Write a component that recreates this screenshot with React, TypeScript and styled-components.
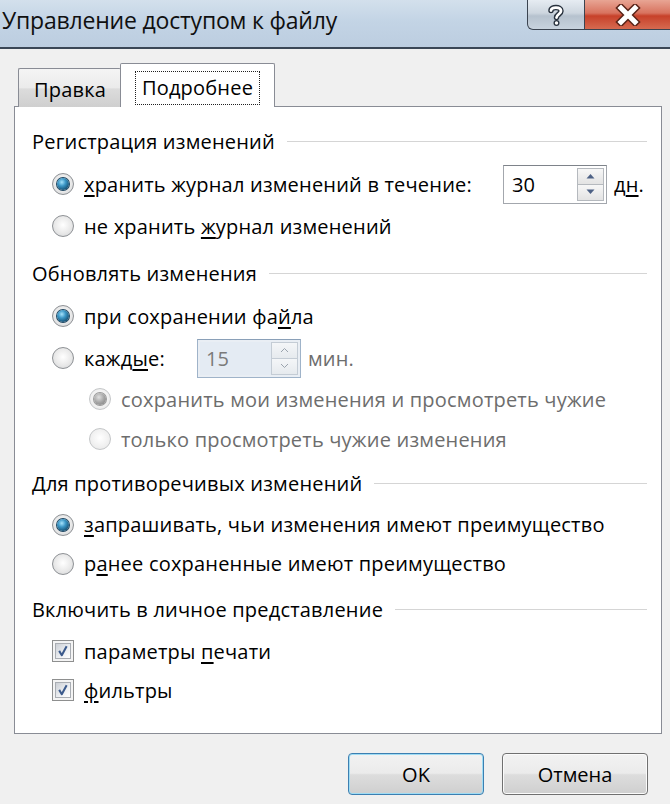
import * as React from 'react';
import styled, { createGlobalStyle, css } from 'styled-components';

const GlobalStyle = createGlobalStyle`
  html, body {
    margin: 0;
    padding: 0;
    background: #f0f0f0;
  }
  body {
    font-family: 'Open Sans', 'Noto Sans', 'DejaVu Sans', sans-serif;
    color: #000000;
  }
`;

const Window = styled.div`
  width: 670px;
  height: 804px;
  overflow: hidden;
  display: flex;
  flex-direction: column;
  background: #f0f0f0;
`;

const TitleBar = styled.div`
  height: 47px;
  flex-shrink: 0;
  display: flex;
  align-items: flex-start;
  background: linear-gradient(to bottom, #d3e0ec 0%, #c3d4e5 45%, #bccde0 100%);
  border-bottom: 2px solid #3a4656;
`;

const Title = styled.div`
  font-size: 23px;
  line-height: 40px;
  padding-left: 2px;
  color: #101010;
  letter-spacing: -0.2px;
  white-space: nowrap;
`;

const Controls = styled.div`
  margin-left: auto;
  display: flex;
  height: 30px;
`;

const CaptionButton = styled.div<{ $close?: boolean }>`
  display: flex;
  align-items: center;
  justify-content: center;
  height: 29px;
  border: 1px solid #3b4450;
  border-top: none;
  ${p => p.$close ? css`
    width: 85px;
    border-right: none;
    border-left: none;
    background: linear-gradient(to bottom, #e8a594 0%, #d8735f 45%, #c7412a 55%, #d66a50 100%);
  ` : css`
    width: 56px;
    border-radius: 0 0 0 6px;
    background: linear-gradient(to bottom, #e6ecf2 0%, #cdd6df 45%, #b6c2ce 55%, #c8d3de 100%);
  `}
`;

const Client = styled.div`
  flex: 1;
  display: flex;
  flex-direction: column;
  padding: 14px 8px 0 14px;
`;

const TabStrip = styled.div`
  display: flex;
  align-items: flex-end;
  padding-left: 4px;
  height: 44px;
  position: relative;
  z-index: 1;
  margin-bottom: -1px;
`;

const Tab = styled.div<{ $active?: boolean }>`
  display: flex;
  align-items: center;
  justify-content: center;
  font-size: 20px;
  letter-spacing: 0.2px;
  border: 1px solid #898c95;
  border-radius: 2px 2px 0 0;
  box-sizing: border-box;
  ${p => p.$active ? css`
    height: 44px;
    width: 155px;
    background: #ffffff;
    border-bottom: none;
    margin-left: -1px;
  ` : css`
    height: 39px;
    width: 103px;
    background: linear-gradient(to bottom, #f4f4f4 0%, #ebebeb 50%, #dcdcdc 52%, #cfcfcf 100%);
    border-right: none;
    border-bottom: none;
    padding-top: 2px;
  `}
`;

const FocusRect = styled.span`
  border: 1px dotted #202020;
  padding: 2px 6px 3px 6px;
  margin-top: 4px;
`;

const Panel = styled.div`
  width: 648px;
  height: 628px;
  box-sizing: border-box;
  border: 1px solid #898c95;
  background: #ffffff;
  padding: 12px 14px 0 17px;
  display: flex;
  flex-direction: column;
`;

const SectionHeader = styled.div<{ $mt?: number }>`
  height: 44px;
  margin-top: ${p => p.$mt ?? 4}px;
  display: flex;
  align-items: center;
  font-size: 20px;
  letter-spacing: 0.2px;
  white-space: nowrap;
  &::after {
    content: '';
    flex: 1;
    height: 1px;
    margin-left: 12px;
    background: #d5d5d5;
  }
`;

const OptionRow = styled.div<{ $h: number; $indent?: number; $disabled?: boolean }>`
  height: ${p => p.$h}px;
  display: flex;
  align-items: center;
  padding-left: ${p => p.$indent ?? 20}px;
  font-size: 20px;
  letter-spacing: 0.2px;
  white-space: nowrap;
  color: ${p => (p.$disabled ? '#6d6d6d' : '#000000')};
`;

const Label = styled.span`
  margin-left: 10px;
`;

const Key = styled.span`
  text-decoration: underline;
  text-underline-offset: 3px;
`;

const RadioOuter = styled.span<{ $disabled?: boolean }>`
  width: 22px;
  height: 22px;
  box-sizing: border-box;
  border-radius: 50%;
  border: 1px solid ${p => (p.$disabled ? '#c4c6c8' : '#8e9195')};
  background: ${p => p.$disabled
    ? 'radial-gradient(circle at 50% 45%, #ffffff 0%, #f1f1f1 55%, #e4e4e4 100%)'
    : 'radial-gradient(circle at 50% 45%, #ffffff 0%, #e9e9e9 55%, #cfd1d3 100%)'};
  display: flex;
  align-items: center;
  justify-content: center;
  flex-shrink: 0;
`;

const RadioDot = styled.span<{ $disabled?: boolean }>`
  width: 12px;
  height: 12px;
  border-radius: 50%;
  background: ${p => p.$disabled
    ? 'radial-gradient(circle at 40% 35%, #e0e0e0 0%, #a5a5a5 50%, #7a7a7a 100%)'
    : 'radial-gradient(circle at 40% 35%, #a6e2fb 0%, #3d98c7 35%, #1a5a80 70%, #0f3450 100%)'};
  box-shadow: 0 0 0 1px ${p => (p.$disabled ? '#9a9a9a' : '#1d4661')};
`;

const Radio: React.FC<{ checked?: boolean; disabled?: boolean }> = ({ checked, disabled }) => (
  <RadioOuter $disabled={disabled}>
    {checked && <RadioDot $disabled={disabled}/>}
  </RadioOuter>
);

const CheckBox = styled.span`
  width: 22px;
  height: 22px;
  box-sizing: border-box;
  border: 1px solid #8e8f8f;
  background: #f4f4f4;
  padding: 2px;
  flex-shrink: 0;
  display: flex;
  svg {
    width: 16px;
    height: 16px;
    background: linear-gradient(135deg, #cbcfd5 0%, #eef0f3 60%, #ffffff 100%);
    border: 1px solid #a9adb3;
    box-sizing: border-box;
  }
`;

const Check: React.FC = () => (
  <CheckBox>
    <svg viewBox="0 0 15 15">
      <path d="M3.4 7.4 L6.2 12 L11.4 2.4" fill="none" stroke="#3b5a8c" strokeWidth="2.2" strokeLinejoin="round"/>
    </svg>
  </CheckBox>
);

const SpinBox = styled.div<{ $disabled?: boolean }>`
  width: 104px;
  height: 39px;
  box-sizing: border-box;
  display: flex;
  align-items: stretch;
  border: 1px solid ${p => (p.$disabled ? '#9fb3c9' : '#a3a7ad')};
  border-top-color: ${p => (p.$disabled ? '#8aa0b8' : '#7e838a')};
  background: ${p => (p.$disabled ? '#e9eef4' : '#ffffff')};
  padding: 2px;
`;

const SpinValue = styled.div<{ $disabled?: boolean }>`
  flex: 1;
  display: flex;
  align-items: center;
  padding-left: 6px;
  font-size: 20px;
  color: ${p => (p.$disabled ? '#7a7a7a' : '#000000')};
  background: ${p => (p.$disabled ? '#e4ebf3' : '#ffffff')};
`;

const SpinButtons = styled.div`
  width: 27px;
  display: flex;
  flex-direction: column;
`;

const SpinButton = styled.div<{ $disabled?: boolean }>`
  flex: 1;
  display: flex;
  align-items: center;
  justify-content: center;
  border: 1px solid ${p => (p.$disabled ? '#c4ccd5' : '#b5b9be')};
  background: ${p => (p.$disabled
    ? 'linear-gradient(to bottom, #f4f6f8, #e6eaee)'
    : 'linear-gradient(to bottom, #f7f7f7, #e3e3e3)')};
  & + & {
    margin-top: -1px;
  }
`;

const Arrow: React.FC<{ up?: boolean; disabled?: boolean }> = ({ up, disabled }) => (
  <svg width="9" height="6" viewBox="0 0 9 6">
    {disabled ? (
      <path d={up ? 'M1 5 L4.5 1.5 L8 5' : 'M1 1 L4.5 4.5 L8 1'} fill="none" stroke="#9aa3ad" strokeWidth="1"/>
    ) : (
      <path d={up ? 'M0.5 5.5 L4.5 1 L8.5 5.5 Z' : 'M0.5 0.5 L4.5 5 L8.5 0.5 Z'} fill="#4d6185"/>
    )}
  </svg>
);

const Spin: React.FC<{ value: string; disabled?: boolean }> = ({ value, disabled }) => (
  <SpinBox $disabled={disabled}>
    <SpinValue $disabled={disabled}>{value}</SpinValue>
    <SpinButtons>
      <SpinButton $disabled={disabled}><Arrow up disabled={disabled}/></SpinButton>
      <SpinButton $disabled={disabled}><Arrow disabled={disabled}/></SpinButton>
    </SpinButtons>
  </SpinBox>
);

const Unit = styled.span<{ $gap: number; $disabled?: boolean }>`
  margin-left: ${p => p.$gap}px;
  color: ${p => (p.$disabled ? '#6d6d6d' : '#000000')};
`;

const ButtonBar = styled.div`
  display: flex;
  justify-content: flex-end;
  gap: 18px;
  padding: 19px 14px 0 0;
`;

const DialogButton = styled.div<{ $default?: boolean; $w: number }>`
  width: ${p => p.$w}px;
  height: 42px;
  box-sizing: border-box;
  border-radius: 4px;
  display: flex;
  align-items: center;
  justify-content: center;
  font-size: 20px;
  border: 1px solid ${p => (p.$default ? '#3c7fb1' : '#707070')};
  background: linear-gradient(to bottom, #f2f2f2 0%, #ebebeb 48%, #dddddd 52%, #cfcfcf 100%);
  box-shadow: inset 0 0 0 1px ${p => (p.$default ? '#9fdcf4' : '#fbfbfb')};
`;

const HelpGlyph = () => (
  <svg width="20" height="24" viewBox="0 0 20 24">
    <path d="M5 7.5 C5 3.5 15 3.5 15 8 C15 11 10.5 11.5 10.5 14.5" fill="none" stroke="#27313d" strokeWidth="5.5" strokeLinecap="round"/>
    <circle cx="10.5" cy="20" r="3" fill="#27313d"/>
    <path d="M5 7.5 C5 3.5 15 3.5 15 8 C15 11 10.5 11.5 10.5 14.5" fill="none" stroke="#ffffff" strokeWidth="2.8" strokeLinecap="round"/>
    <circle cx="10.5" cy="20" r="1.7" fill="#ffffff"/>
  </svg>
);

const CloseGlyph = () => (
  <svg width="26" height="22" viewBox="0 0 26 22">
    <path d="M6 4 L20 18 M20 4 L6 18" stroke="#5a2418" strokeWidth="8" strokeLinecap="square"/>
    <path d="M6 4 L20 18 M20 4 L6 18" stroke="#ffffff" strokeWidth="5" strokeLinecap="square"/>
  </svg>
);

export default function App() {
  return (
    <>
      <GlobalStyle/>
      <Window>
        <TitleBar>
          <Title>Управление доступом к файлу</Title>
          <Controls>
            <CaptionButton><HelpGlyph/></CaptionButton>
            <CaptionButton $close><CloseGlyph/></CaptionButton>
          </Controls>
        </TitleBar>
        <Client>
          <TabStrip>
            <Tab>Правка</Tab>
            <Tab $active><FocusRect>Подробнее</FocusRect></Tab>
          </TabStrip>
          <Panel>
            <SectionHeader $mt={0}>Регистрация изменений</SectionHeader>
            <OptionRow $h={42}>
              <Radio checked/>
              <Label><Key>х</Key>ранить журнал изменений в течение:</Label>
              <Unit $gap={31}><Spin value="30"/></Unit>
              <Unit $gap={7}>д<Key>н</Key>.</Unit>
            </OptionRow>
            <OptionRow $h={42}>
              <Radio/>
              <Label>не хранить <Key>ж</Key>урнал изменений</Label>
            </OptionRow>

            <SectionHeader>Обновлять изменения</SectionHeader>
            <OptionRow $h={42}>
              <Radio checked/>
              <Label>при сохранении фа<Key>й</Key>ла</Label>
            </OptionRow>
            <OptionRow $h={42}>
              <Radio/>
              <Label>кажд<Key>ы</Key>е:</Label>
              <Unit $gap={32}><Spin value="15" disabled/></Unit>
              <Unit $gap={7} $disabled>мин.</Unit>
            </OptionRow>
            <OptionRow $h={40} $indent={57} $disabled>
              <Radio checked disabled/>
              <Label>сохранить мои изменения и просмотреть чужие</Label>
            </OptionRow>
            <OptionRow $h={40} $indent={57} $disabled>
              <Radio disabled/>
              <Label>только просмотреть чужие изменения</Label>
            </OptionRow>

            <SectionHeader $mt={2}>Для противоречивых изменений</SectionHeader>
            <OptionRow $h={39}>
              <Radio checked/>
              <Label><Key>з</Key>апрашивать, чьи изменения имеют преимущество</Label>
            </OptionRow>
            <OptionRow $h={39}>
              <Radio/>
              <Label>р<Key>а</Key>нее сохраненные имеют преимущество</Label>
            </OptionRow>

            <SectionHeader>Включить в личное представление</SectionHeader>
            <OptionRow $h={40}>
              <Check/>
              <Label>параметры <Key>п</Key>ечати</Label>
            </OptionRow>
            <OptionRow $h={38}>
              <Check/>
              <Label><Key>ф</Key>ильтры</Label>
            </OptionRow>
          </Panel>
          <ButtonBar>
            <DialogButton $default $w={136}>OK</DialogButton>
            <DialogButton $w={146}>Отмена</DialogButton>
          </ButtonBar>
        </Client>
      </Window>
    </>
  );
}
